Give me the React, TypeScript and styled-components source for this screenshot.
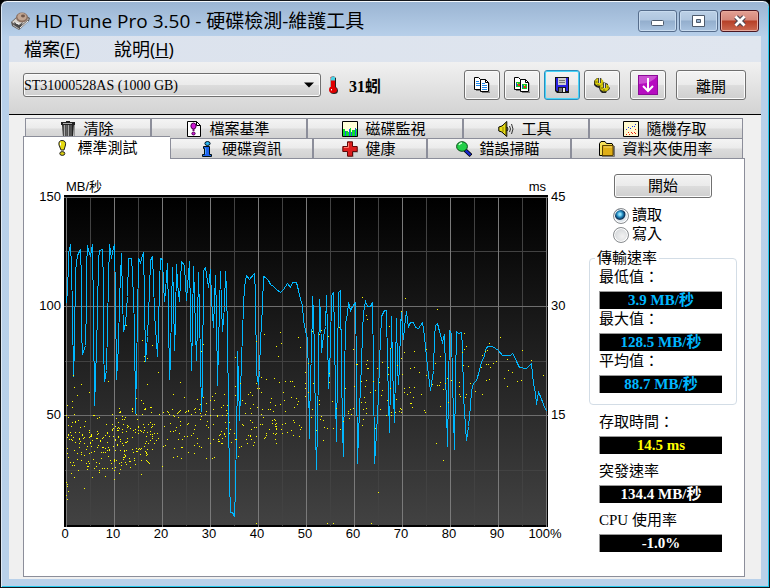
import React, { useState } from "react";
import styled, { createGlobalStyle, css } from "styled-components";

const UI_FONT = `"Liberation Serif", "Noto Sans CJK TC", sans-serif`;
const TITLE_FONT = `"Open Sans", "Noto Sans CJK TC", sans-serif`;
const AXIS_FONT = `"Liberation Sans", "Noto Sans CJK TC", sans-serif`;
const EDGE = "#8c8e9a";

const Global = createGlobalStyle`
  * { box-sizing: border-box; }
  body { margin: 0; background: #000; }
  button, select, input { font: inherit; color: inherit; margin: 0; }
`;

const Window = styled.div`
  min-height: 100vh;
  display: flex;
  flex-direction: column;
  padding: 0 8px 8px;
  border: 1px solid #14161b;
  border-radius: 7px 7px 0 0;
  background: linear-gradient(#9ab4d2 0, #b8d0ea 36px, #b9d1ea 100%);
  box-shadow: inset 0 1px #f4f8fc, inset 1px 0 #dfeaf6, inset -1px -1px #25c9ee;
  font-family: ${UI_FONT};
  font-size: 15px;
  font-weight: 400;
  color: #000;
`;

const TitleBar = styled.header`
  height: 35px;
  padding: 5px 2px 0 2px;
  display: flex;
  align-items: center;
  gap: 4px;
`;

const Title = styled.h1`
  flex: 1;
  margin: 0;
  font-family: ${TITLE_FONT};
  font-size: 19px;
  line-height: 28px;
  font-weight: 400;
  white-space: nowrap;
`;

const Caption = styled.div`
  display: flex;
  gap: 2px;
`;

const CaptionButton = styled.button<{ $close?: boolean }>`
  width: 39px;
  height: 22px;
  padding: 0;
  display: grid;
  place-items: center;
  border: 1px solid ${(p) => (p.$close ? "#4a1621" : "#566d8c")};
  border-radius: 3px;
  box-shadow: inset 0 0 0 1px ${(p) => (p.$close ? "#e8a99c" : "#c8dbef")};
  background: ${(p) =>
    p.$close
      ? "linear-gradient(#e3a094 0, #d5877a 45%, #b63f27 50%, #cc6a52 100%)"
      : "linear-gradient(#bcd0e6 0, #afc6df 45%, #93aecd 50%, #a9c3e0 100%)"};
`;

const MenuBar = styled.nav`
  height: 26px;
  padding: 0 15px;
  display: flex;
  gap: 34px;
  background: linear-gradient(90deg, #dbe2ed, #e0e6ef);
`;

const MenuItem = styled.button`
  padding: 0;
  border: 0;
  background: none;
  font-family: ${TITLE_FONT};
  font-size: 18px;
  line-height: 26px;
  white-space: nowrap;
`;

const Toolbar = styled.div`
  height: 53px;
  padding: 0 15px 6px 14px;
  display: flex;
  align-items: center;
  border-bottom: 1px solid #000;
  background: linear-gradient(#f1f1f1, #d3d3d3);
`;

const raised = css`
  border: 1px solid #707070;
  border-radius: 3px;
  box-shadow: inset 0 0 0 1px #fbfbfb;
  background: linear-gradient(#f3f3f3 0, #ebebeb 48%, #dcdcdc 52%, #cfcfcf 100%);
`;

const DriveBox = styled.label`
  position: relative;
  flex: 0 1 298px;
  height: 24px;
`;

const DriveSelect = styled.select`
  ${raised}
  width: 100%;
  height: 24px;
  padding: 0 20px 0 0;
  appearance: none;
  font-size: 14px;
`;

const DriveArrow = styled.svg`
  position: absolute;
  right: 7px;
  top: 9px;
  pointer-events: none;
`;

const Temperature = styled.output`
  flex: 1;
  margin-left: 7px;
  display: flex;
  align-items: center;
  gap: 11px;
  font-size: 16px;
  font-weight: 700;
  white-space: nowrap;
`;

const Tools = styled.div`
  display: flex;
  gap: 4px;
`;

const ToolButton = styled.button<{ $focus?: boolean; $gap?: boolean; $wide?: boolean }>`
  ${raised}
  width: ${(p) => (p.$wide ? 70 : 36)}px;
  height: 30px;
  padding: 0;
  margin-left: ${(p) => (p.$gap ? 6 : 0)}px;
  display: grid;
  place-items: center;
  ${(p) => p.$focus && "border-color: #2a8dbd; box-shadow: inset 0 0 0 1px #48d4f8;"}
`;

const Body = styled.main`
  flex: 1;
  display: flex;
  flex-direction: column;
  padding: 3px 16px 2px 14px;
  background: #f0f0f0;
`;

const TabRow = styled.div<{ $cols: string; $back?: boolean }>`
  display: grid;
  grid-template-columns: ${(p) => p.$cols};
  height: 20px;
  margin: 0 2px 0 ${(p) => (p.$back ? 2 : 0)}px;
`;

const Tab = styled.button<{ $active?: boolean }>`
  min-width: 0;
  padding: 0 2px 0 0;
  display: flex;
  align-items: center;
  justify-content: center;
  gap: 7px;
  border: 1px solid ${EDGE};
  border-bottom: 0;
  line-height: 18px;
  white-space: nowrap;
  background: linear-gradient(#f4f4f4 0, #ebebeb 48%, #dcdcdc 52%, #d2d2d2 100%);
  ${(p) =>
    p.$active &&
    css`
      position: relative;
      z-index: 1;
      margin: -2px 0 -1px;
      border-right: 0;
      background: #fff;
    `}
`;

const Panel = styled.section`
  flex: 1;
  display: flex;
  padding: 15px 7px 20px 0;
  border: 1px solid ${EDGE};
  background: #fff;
`;

const ChartArea = styled.figure`
  flex: 1;
  min-width: 0;
  margin: 0;
  padding-top: 5px;
  display: grid;
  grid-template-columns: 40px 1fr 41px;
  grid-template-rows: 16px 332px auto;
  align-content: start;
  font-family: ${AXIS_FONT};
  font-size: 13px;
  line-height: 16px;
`;

const Units = styled.div`
  grid-column: 2;
  display: flex;
  justify-content: space-between;
  padding: 0 2px;
`;

const Plot = styled.svg`
  grid-column: 2;
  width: 100%;
  height: 332px;
  display: block;
`;

const Scale = styled.div<{ $right?: boolean }>`
  grid-row: 2;
  grid-column: ${(p) => (p.$right ? 3 : 1)};
  margin-top: -6px;
  padding: 0 3px;
  display: grid;
  grid-auto-rows: 109px;
  text-align: ${(p) => (p.$right ? "left" : "right")};
`;

const Ruler = styled.div`
  grid-column: 1 / -1;
  padding: 0 20px 0 17px;
  display: grid;
  grid-template-columns: repeat(11, 1fr);
  line-height: 14px;
  text-align: center;
`;

const Side = styled.aside`
  flex: 0 0 148px;
  display: flex;
  flex-direction: column;
`;

const StartButton = styled.button`
  ${raised}
  width: 98px;
  height: 24px;
  padding: 0;
  align-self: center;
  line-height: 20px;
`;

const Modes = styled.div`
  margin: 8px 0 5px 24px;
  display: grid;
`;

const ModeLabel = styled.label`
  display: flex;
  align-items: center;
  gap: 3px;
  line-height: 19px;
`;

const Radio = styled.input`
  appearance: none;
  width: 16px;
  height: 16px;
  border: 1px solid #8a8d90;
  border-radius: 50%;
  box-shadow: inset 0 0 0 1px #fff;
  background: radial-gradient(circle at 60% 60%, #f2f2f2, #c9cdd1);
  &:checked {
    background: radial-gradient(circle at 42% 38%, #8fe0fb 0 1px, #1f87bd 3px, #0c2f55 5px, #dfe6ec 6px);
  }
`;

const Group = styled.fieldset`
  min-width: 0;
  height: 156px;
  margin: 0;
  padding: 0 9px;
  border: 1px solid #d3dde6;
  border-radius: 4px;
`;

const Legend = styled.legend`
  margin-left: -4px;
  padding: 0 2px;
  line-height: 18px;
`;

const Readings = styled.div<{ $gap: number; $inset?: boolean }>`
  display: grid;
  gap: ${(p) => p.$gap}px;
  width: ${(p) => (p.$inset ? "123px" : "auto")};
  margin: ${(p) => (p.$inset ? "7px 0 0 10px" : "0")};
`;

const ReadingBox = styled.div`
  width: 123px;
  display: grid;
  gap: 4px;
  line-height: 20px;
  white-space: nowrap;
`;

const Value = styled.output<{ $color: string }>`
  height: 18px;
  border-top: 1px solid #9a9a9a;
  border-left: 1px solid #9a9a9a;
  background: #000;
  color: ${(p) => p.$color};
  font-weight: 700;
  line-height: 17px;
  text-align: center;
`;

const TRACE: number[] = [
  109,370,112,325,114,260,116,220,121,192,124,260,127,400,130,590,133,500,137,270,142,225,151,208,154,300,155,450,158,523,
  165,495,168,370,170,260,172,195,176,210,180,228,187,192,190,400,193,675,197,600,201,400,204,240,208,210,217,208,219,310,
  221,500,224,605,230,570,233,440,236,300,239,192,244,235,248,215,253,193,256,350,260,598,265,500,268,360,271,290,274,220,
  277,350,281,455,286,430,291,350,296,235,305,235,308,280,312,440,316,700,319,560,322,420,325,235,331,248,336,225,340,217,
  343,350,346,545,353,470,357,330,361,240,367,228,370,300,374,400,382,530,385,450,388,310,391,235,397,238,400,310,403,365,
  407,330,412,250,415,400,418,599,421,540,424,380,427,262,430,350,433,510,436,420,439,253,443,310,448,365,454,245,463,255,
  466,310,470,360,473,320,478,245,481,400,484,572,487,430,490,258,493,350,499,540,502,430,506,278,509,400,514,695,517,610,
  520,270,526,262,535,322,541,268,545,360,550,443,556,285,559,400,562,617,566,500,571,275,574,380,577,455,583,380,586,273,
  589,330,593,450,595,700,598,900,601,998,608,998,613,1009,616,925,619,760,621,600,622,515,625,600,628,720,631,640,634,540,
  637,460,640,380,643,320,649,287,658,297,673,280,676,340,679,580,685,612,688,570,692,480,696,380,700,290,706,292,715,302,
  720,313,730,320,740,328,751,337,760,328,773,310,781,322,788,307,800,307,804,330,810,358,817,375,821,420,826,450,831,475,
  834,590,838,776,842,560,844,550,847,348,851,400,854,520,857,750,859,868,862,740,865,560,868,357,871,400,874,518,880,470,
  886,440,890,345,892,450,895,626,898,560,900,510,904,345,910,337,913,450,916,650,919,785,922,560,925,337,931,331,934,560,
  937,745,940,830,943,600,947,430,951,400,955,368,961,390,968,378,976,367,979,560,982,851,985,760,988,700,991,610,994,560,
  998,450,1001,400,1006,363,1012,380,1020,378,1028,367,1030,560,1033,851,1039,760,1045,650,1048,540,1051,480,1054,410,
  1062,391,1069,391,1072,550,1077,757,1080,600,1084,408,1087,560,1093,728,1096,560,1099,415,1102,560,1105,613,1108,560,
  1111,440,1115,395,1118,450,1120,478,1123,440,1129,393,1132,420,1136,438,1140,427,1150,427,1157,442,1165,444,1176,427,
  1180,445,1186,500,1192,560,1198,610,1201,632,1205,610,1210,570,1213,470,1216,435,1222,430,1229,455,1237,487,1243,463,
  1247,570,1252,800,1255,640,1259,450,1264,460,1267,600,1273,808,1276,600,1279,455,1286,460,1294,457,1297,500,1300,650,
  1305,740,1309,782,1314,740,1320,680,1325,630,1331,610,1340,600,1348,570,1354,545,1361,535,1368,503,1376,498,1388,500,
  1405,511,1418,526,1440,526,1447,521,1453,528,1460,545,1468,562,1488,566,1503,549,1507,580,1510,610,1515,640,1519,673,
  1525,636,1532,650,1540,672,1550,693,
];

const UPPER_LEFT = [
  289,436,337,481,343,529,344,544,352,535,367,496,520,493,514,514,616,532,679,484,703,463,739,499,745,529,
];
const LOWER_LEFT = [
  130,46,154,73,133,82,178,97,142,106,127,124,112,136,127,142,133,163,109,166,235,64,385,37,352,73,451,67,430,103,319,115,
  334,121,340,130,343,148,463,112,502,118,520,112,547,109,556,100,583,103,541,121,553,121,268,145,307,145,307,154,412,154,
  418,163,427,148,445,157,448,154,469,154,496,157,493,148,511,133,530,130,550,148,580,136,574,142,616,79,631,70,616,106,
  637,121,646,130,655,103,661,97,667,106,679,70,682,85,688,85,694,97,694,52,709,58,733,55,748,67,670,133,697,148,721,148,
  730,154,700,172,727,181,727,190,739,205,736,223,739,220,709,220,706,232,703,235,718,208,697,193,739,250,667,187,664,208,
  661,229,664,238,673,247,670,256,655,226,649,238,652,250,640,196,628,262,625,289,619,238,613,220,634,259,679,490,598,220,
  583,220,577,235,577,250,568,244,550,238,541,250,553,292,547,295,529,295,109,367,112,373,112,379,109,406,112,418,115,394,
  163,385,133,352,187,352,226,349,253,358,334,343,268,340,397,319,430,292,454,295,442,289,493,280,508,259,514,262,475,277,
];
const UPPER_RIGHT = [
  31,457,19,499,34,490,25,529,85,472,91,502,115,550,127,454,148,463,154,451,175,469,208,442,277,352,289,406,292,418,
  250,508,259,553,292,541,289,553,296,565,337,547,358,439,361,505,355,562,322,565,406,355,394,394,403,517,433,514,433,562,
  394,535,382,556,502,388,469,508,496,550,511,529,583,460,589,499,583,508,577,517,580,556,595,559,637,526,646,514,652,511,
  658,490,691,472,649,553,655,553,661,562,670,550,679,544,712,538,757,511,784,541,
];
const LOWER_RIGHT = [
  13,55,46,64,61,64,67,64,73,80,40,97,4,115,1,127,31,133,43,121,64,112,79,115,85,124,82,133,73,142,0,148,46,154,16,181,
  19,190,37,193,46,190,70,181,73,187,88,196,94,202,91,208,16,199,19,208,19,220,34,208,37,220,52,217,64,211,70,226,88,229,
  16,238,19,250,106,38,106,70,106,85,106,109,115,97,127,148,130,70,124,172,148,121,148,133,154,169,151,178,160,181,163,202,
  172,205,190,205,160,241,139,211,178,40,178,67,187,124,199,145,211,208,220,184,226,85,235,154,241,148,235,160,244,163,
  238,175,253,79,250,145,262,13,274,64,286,79,289,61,292,25,283,112,274,127,286,127,280,148,289,145,289,160,280,178,
  277,196,301,97,316,91,316,205,310,64,328,67,334,106,337,91,331,148,349,166,352,121,355,43,361,85,364,157,364,166,376,157,
  379,118,391,145,388,154,394,148,394,157,397,43,403,85,403,97,412,103,421,97,418,82,421,130,424,130,427,142,430,112,
  433,82,421,25,448,37,454,103,469,46,463,151,466,157,487,73,502,76,508,76,496,10,511,67,511,139,520,88,526,70,532,55,
  535,127,544,61,568,67,568,79,568,103,571,109,580,16,595,19,586,112,589,103,616,94,637,103,649,61,658,58,670,10,679,4,
  715,31,727,37,703,55,712,79,742,64,754,61,784,1,820,46,499,250,520,301,325,397,172,490,190,490,304,490,634,22,601,70,
];

type Pt = [number, number];

const pairs = (list: number[], dx = 0, dy = 0): Pt[] => {
  const out: Pt[] = [];
  for (let i = 0; i < list.length; i += 2) out.push([list[i] + dx, list[i + 1] + dy]);
  return out;
};

/* Dense clusters of short access times, spread by a fixed seed. */
const cluster = (seed: number, count: number, x0: number, x1: number, y0: number, y1: number): Pt[] => {
  let s = seed;
  const next = () => (s = (s * 16807) % 2147483647) / 2147483647;
  return Array.from({ length: count }, () => {
    const t = next();
    return [x0 + t * (x1 - x0), y0 + next() * (y1 - y0) - t * 30] as Pt;
  });
};

/* Samples are stored at three units per pixel of the plot. */
const toPlot = ([x, y]: Pt): Pt => [Math.floor(x / 3) - 34, Math.floor(y / 3) - 15];

const LINE = pairs(TRACE).map(toPlot).map(([x, y]) => `${x},${y}`).join(" ");
const DOTS = [
  ...pairs(UPPER_LEFT),
  ...pairs(LOWER_LEFT, 0, 540),
  ...pairs(UPPER_RIGHT, 720),
  ...pairs(LOWER_RIGHT, 720, 540),
  ...cluster(71, 190, 112, 375, 760, 890),
  ...cluster(523, 70, 112, 375, 710, 790),
  ...cluster(977, 75, 380, 600, 700, 820),
  ...cluster(4242, 22, 600, 740, 670, 790),
]
  .map(toPlot)
  .map(([x, y]) => `M${x} ${y}h1v1h-1z`)
  .join("");

const STEPS = Array.from({ length: 21 }, (_, i) => i);
const ROWS = [2, 56, 111, 166, 220, 275];

function BenchmarkPlot() {
  return (
    <Plot viewBox="0 0 484 332" preserveAspectRatio="none" shapeRendering="crispEdges" role="img" aria-label="MB/秒">
      <defs>
        <linearGradient id="plotFill" x1="0" y1="0" x2="0" y2="1">
          <stop offset="0" stopColor="#000" />
          <stop offset="1" stopColor="#424242" />
        </linearGradient>
      </defs>
      <rect width="484" height="332" fill="#000" />
      <rect x="2" y="3" width="481" height="327" fill="url(#plotFill)" />
      {ROWS.map((y, i) => (i % 2 ? <rect key={y} x="1" y={y} width="482" height="1" fill="#424242" /> : null))}
      {STEPS.map((i) => (i % 2 ? <rect key={i} x={2 + i * 24} y="3" width="1" height="328" fill="#424242" /> : null))}
      {ROWS.map((y, i) => (i % 2 ? null : <rect key={y} x="0" y={y} width="484" height="1" fill="#6e6e6e" />))}
      {STEPS.map((i) => (i % 2 ? null : <rect key={i} x={2 + i * 24} y="3" width="1" height="329" fill="#7a7a7a" />))}
      <polyline points={LINE} transform="translate(.5 .5)" fill="none" stroke="#00b7ff" strokeWidth="1" />
      <path d={DOTS} fill="#ff0" />
    </Plot>
  );
}

const Icon = ({ children, size = 16 }: { children: React.ReactNode; size?: number }) => (
  <svg width={size} height={size} viewBox="0 0 16 16" aria-hidden="true">
    {children}
  </svg>
);

const AppIcon = () => (
  <svg width="20" height="20" viewBox="0 0 20 20" aria-hidden="true">
    <path d="M0 11 10 2l9 5-1 3-10 9-7-4z" fill="#5f5a58" />
    <path d="M1 11 10 3l8 5-10 8z" fill="#d9d4ce" />
    <ellipse cx="11" cy="6.500" rx="6" ry="5" fill="#8a6f60" />
    <ellipse cx="11" cy="5.800" rx="4.600" ry="3.700" fill="#c2a692" />
    <ellipse cx="12" cy="5" rx="2" ry="1.400" fill="#70574a" />
    <path d="M3 11l5 3 4-3-3 6-5-2z" fill="#4c4a4a" />
    <path d="M5 12l3 1M9 17l8-7" stroke="#f7f7f7" />
    <path d="M2 14l6 4" stroke="#b6b6b6" />
  </svg>
);

const Thermometer = () => (
  <svg width="10" height="18" viewBox="0 0 10 18" aria-hidden="true">
    <path d="M3 2q2-3 5 0v9q2 1 2 3.500a4 3.500 0 0 1-8 0q0-2.500 1-3.500z" fill="#222" />
    <path d="M2 2q2-3 5-1v10q2 1 2 3a4 3 0 0 1-8 0q0-2 1-3V2z" fill="#e00000" />
    <path d="M3 1.500q1-2 4-.5v3.500H3z" fill="#49d3e6" />
    <path d="M2.500 2v9" stroke="#a9a9a9" />
    <path d="M3.500 13v1.500" stroke="#fff" />
  </svg>
);

const Pages = ({ picture }: { picture?: boolean }) => (
  <Icon>
    <path d="M2 13.500h5M8 15.500h8V6" stroke="#777" fill="none" />
    <path d="M.5.5h4l2 2v10h-6z" fill="#fff" stroke="#000" />
    <path d="M6.500 2.500h5l3 3v9h-8z" fill="#fff" stroke="#000" />
    <path d="M11.500 2.500v3h3" fill="none" stroke="#000" />
    {picture ? (
      <>
        <path d="M2 5h4v5H2zM8 7h5v5H8z" fill="#15c42b" />
        <path d="M2 6h1v3H2zM8 8h1v3H8z" fill="#1458d8" />
        <path d="M4 7h2v2H4zM10 9h2v2h-2z" fill="#f02a10" />
        <path d="M3 6h1v1H3zM10 8h1v1h-1z" fill="#ffee20" />
      </>
    ) : (
      <path d="M2 4.500h3M2 6.500h4M2 8.500h4M8 6.500h3M8 8.500h5M8 10.500h5M8 12.500h5" stroke="#1c86e8" />
    )}
  </Icon>
);

const Floppy = () => (
  <Icon>
    <path d="M1 0h14v16H3l-2-2z" fill="#111" />
    <path d="M2 1h12v13H3l-1-1z" fill="#2a22e0" />
    <path d="M4 1h8v7H4z" fill="#cfcfcf" />
    <path d="M5 3.500h6M5 5.500h6" stroke="#777" />
    <path d="M4 10h8v5H4z" fill="#1a1a1a" />
    <path d="M9 11h2v4H9z" fill="#eee" />
    <path d="M5 11h3v4H5z" fill="#777" />
  </Icon>
);

const Gears = () => (
  <Icon>
    <path d="M0 4l2-2 1-1h4l1 2 1 2 3 1 2 1v2l2 2-1 2-2 1-1 2h-4l-2-2-1-3-3-1-2-2z" fill="#222" />
    <ellipse cx="5" cy="5" rx="4" ry="3.600" fill="#dccf10" strokeDasharray="2 1" stroke="#c4b800" />
    <ellipse cx="10.500" cy="10.500" rx="4.200" ry="3.600" fill="#dccf10" strokeDasharray="2 1" stroke="#c4b800" />
    <path d="M1.500 5h2M3 8h2M7 11h2M9 13h2M13 10h1" stroke="#6b6200" />
    <path d="M5.500 1v5M10.500 6v5" stroke="#444" strokeWidth="3" />
    <path d="M5.500 1v5M10.500 6v5" stroke="#ddd" />
  </Icon>
);

const DownArrow = () => (
  <svg width="20" height="20" viewBox="0 0 20 20" aria-hidden="true">
    <rect x="0.500" y="0.500" width="19" height="19" fill="#b60cc0" stroke="#8a0b96" />
    <path d="M1 9V1h18q-4 7-18 8z" fill="#cb50d3" />
    <path d="M10 3v12M5 11l5 5 5-5" stroke="#fff" strokeWidth="2" fill="none" />
  </svg>
);

const Trash = () => (
  <Icon>
    <path d="M4 15.500h10.500V4" stroke="#999" fill="none" />
    <path d="M2 3h12l-1 13H3z" fill="#222" />
    <path d="M4.500 4v11M8.500 4v11" stroke="#aaa" strokeWidth="1.600" />
    <path d="M6.500 4v11M11 4v11" stroke="#666" strokeWidth="1.400" />
    <path d="M1 1h14v3H1z" fill="#222" />
    <path d="M6 1h4" stroke="#222" strokeWidth="2" />
    <path d="M3 2.500h9" stroke="#aaa" />
  </Icon>
);

const FileMark = () => (
  <Icon>
    <path d="M1.500.5h9l4 4v11h-13z" fill="#fff" stroke="#000" />
    <path d="M10.500.5v4h4" fill="none" stroke="#000" />
    <ellipse cx="7.500" cy="5" rx="2.600" ry="3" fill="#d018d8" stroke="#4a004e" />
    <path d="M6.500 8h2v2h-2z" fill="#6a0870" />
    <ellipse cx="7.500" cy="12.500" rx="1.600" ry="1.500" fill="#d018d8" stroke="#4a004e" />
  </Icon>
);

const Monitor = () => (
  <Icon>
    <path d="M.5.5h15v15H.5z" fill="#ffffd8" stroke="#000" />
    <path d="M1 8h2v7H1zM4 10h2v5H4zM6 11h1v4H6zM8 7h1v8H8zM10 9h3v6h-3zM14 8h1v7h-1z" fill="#0be02b" />
    <path d="M3 10h1v5H3zM7 8h1v7H7zM9 11h1v4H9zM13 7h1v8h-1z" fill="#2458e8" />
  </Icon>
);

const Speaker = () => (
  <Icon>
    <path d="M.8 6v4l3 1 5 4.500V.5L4 5z" fill="#e8dc18" stroke="#000" />
    <path d="M5 6v5M7.500 2v12" stroke="#8f8500" />
    <path d="M9 6q2 2 0 4" fill="#fff" stroke="#000" />
    <path d="M11.500 5q2 3 0 6M13.500 3q3 5 0 10" stroke="#333" fill="none" />
  </Icon>
);

const Scatter = () => (
  <Icon>
    <path d="M.5.5h15v15H.5z" fill="#fff9cf" stroke="#000" />
    <path d="M3 8h1v1H3zM5 6h1v1H5zM7 7h1v1H7zM9 5h1v1H9zM11 5h1v1h-1zM12 3h1v1h-1z" fill="#1b35e8" />
    <path d="M3 13h1v1H3zM5 11h1v1H5zM6 13h1v1H6zM8 11h1v1H8zM9 12h1v1H9zM11 11h1v1h-1zM12 8h1v1h-1zM12 12h1v1h-1z" fill="#ee2410" />
  </Icon>
);

const Exclaim = () => (
  <Icon>
    <path d="M8 .5c3 0 4 2 3.500 4.500L10 10H7L5 5C4.500 2 5.500.5 8 .5z" fill="#e6da10" stroke="#222" />
    <path d="M6.500 2.500v3" stroke="#fff" />
    <ellipse cx="8.300" cy="13.500" rx="2.500" ry="1.900" fill="#d9cd10" stroke="#222" />
  </Icon>
);

const Info = () => (
  <Icon>
    <ellipse cx="8.500" cy="2.500" rx="2.600" ry="2" fill="#2bb8f0" stroke="#012" />
    <path d="M4.500 5.500h6v8h2v2h-9v-2h2v-6h-1z" fill="#1d62f0" stroke="#011" />
    <path d="M6.500 7v6" stroke="#4fa4ff" />
  </Icon>
);

const Health = () => (
  <Icon>
    <path d="M6 16h5v-5h5V6" stroke="#888" fill="none" />
    <path d="M5.500.8h5v4.700h4.700v5h-4.700v4.700h-5v-4.700H.8v-5h4.700z" fill="#dc1d1d" stroke="#5e0808" />
    <path d="M6.500 2v4.500H2" stroke="#ff7d70" fill="none" />
  </Icon>
);

const Magnifier = () => (
  <Icon>
    <path d="M9 9l6 5.500" stroke="#000" strokeWidth="4" />
    <path d="M9.500 9.500l5 4.600" stroke="#1526c8" strokeWidth="2.400" />
    <ellipse cx="6" cy="5.500" rx="5.400" ry="4.800" fill="#22cf48" stroke="#084a16" />
    <path d="M3 4q1-2 3-2" stroke="#c9ffd2" fill="none" strokeWidth="1.400" />
  </Icon>
);

const Folder = () => (
  <Icon>
    <path d="M3 15.500h12.500V5" stroke="#777" fill="none" />
    <path d="M.5 14.500V2.500l1.500-2h4l1.500 2H13l1 2v10z" fill="#f5e05a" stroke="#000" />
    <path d="M3.500 4.500h10.500v10H3.500z" fill="#dfae16" stroke="#5c4300" />
    <path d="M5 6h8" stroke="#f5d566" />
  </Icon>
);

const BACK_TABS: [string, React.FC][] = [
  ["清除", Trash],
  ["檔案基準", FileMark],
  ["磁碟監視", Monitor],
  ["工具", Speaker],
  ["隨機存取", Scatter],
];
const FRONT_TABS: [string, React.FC][] = [
  ["標準測試", Exclaim],
  ["硬碟資訊", Info],
  ["健康", Health],
  ["錯誤掃瞄", Magnifier],
  ["資料夾使用率", Folder],
];

function Reading({ id, label, value, color }: { id: string; label: string; value: string; color: string }) {
  return (
    <ReadingBox>
      <label htmlFor={id}>{label}</label>
      <Value id={id} $color={color}>
        {value}
      </Value>
    </ReadingBox>
  );
}

export default function App() {
  const [mode, setMode] = useState("read");
  return (
    <>
      <Global />
      <Window>
        <TitleBar>
          <AppIcon />
          <Title>HD Tune Pro 3.50 - 硬碟檢測-維護工具</Title>
          <Caption>
            <CaptionButton aria-label="最小化">
              <svg width="15" height="12" viewBox="0 0 15 12">
                <rect x="1.500" y="5.500" width="12" height="5" rx="1" fill="#fff" stroke="#4d5a6c" />
              </svg>
            </CaptionButton>
            <CaptionButton aria-label="最大化">
              <svg width="13" height="12" viewBox="0 0 13 12">
                <path d="M.5.5h12v11H.5zM4.500 4.500v3h4v-3z" fill="#fff" stroke="#4d5a6c" fillRule="evenodd" />
              </svg>
            </CaptionButton>
            <CaptionButton $close aria-label="關閉">
              <svg width="14" height="12" viewBox="0 0 14 12">
                <path d="M3 2l8 8M11 2l-8 8" stroke="#4b4450" strokeWidth="5" />
                <path d="M2.500 1.500l9 9M11.500 1.500l-9 9" stroke="#fff" strokeWidth="2.800" />
              </svg>
            </CaptionButton>
          </Caption>
        </TitleBar>
        <MenuBar>
          <MenuItem>
            檔案(<u>F</u>)
          </MenuItem>
          <MenuItem>
            說明(<u>H</u>)
          </MenuItem>
        </MenuBar>
        <Toolbar>
          <DriveBox>
            <DriveSelect aria-label="硬碟">
              <option>ST31000528AS (1000 GB)</option>
            </DriveSelect>
            <DriveArrow width="10" height="6" viewBox="0 0 10 6">
              <path d="M0 .5h10L5 5.500z" />
            </DriveArrow>
          </DriveBox>
          <Temperature>
            <Thermometer />
            31蚓
          </Temperature>
          <Tools>
            <ToolButton aria-label="複製文字">
              <Pages />
            </ToolButton>
            <ToolButton aria-label="複製圖片">
              <Pages picture />
            </ToolButton>
            <ToolButton $focus aria-label="儲存">
              <Floppy />
            </ToolButton>
            <ToolButton aria-label="選項">
              <Gears />
            </ToolButton>
            <ToolButton $gap aria-label="下移">
              <DownArrow />
            </ToolButton>
            <ToolButton $gap $wide>
              離開
            </ToolButton>
          </Tools>
        </Toolbar>
        <Body>
          <TabRow role="tablist" $back $cols="126fr 156fr 156fr 126fr 154fr">
            {BACK_TABS.map(([name, Glyph]) => (
              <Tab key={name} role="tab" aria-selected={false}>
                <Glyph />
                {name}
              </Tab>
            ))}
          </TabRow>
          <TabRow role="tablist" $cols="147fr 143fr 114fr 144fr 172fr">
            {FRONT_TABS.map(([name, Glyph], i) => (
              <Tab key={name} role="tab" aria-selected={i === 0} $active={i === 0}>
                <Glyph />
                {name}
              </Tab>
            ))}
          </TabRow>
          <Panel role="tabpanel">
            <ChartArea>
              <Units>
                <span>MB/秒</span>
                <span>ms</span>
              </Units>
              <Scale>
                <span>150</span>
                <span>100</span>
                <span>50</span>
              </Scale>
              <BenchmarkPlot />
              <Scale $right>
                <span>45</span>
                <span>30</span>
                <span>15</span>
              </Scale>
              <Ruler>
                {["0", "10", "20", "30", "40", "50", "60", "70", "80", "90", "100%"].map((t) => (
                  <span key={t}>{t}</span>
                ))}
              </Ruler>
            </ChartArea>
            <Side>
              <StartButton>開始</StartButton>
              <Modes role="radiogroup">
                <ModeLabel>
                  <Radio type="radio" name="mode" checked={mode === "read"} onChange={() => setMode("read")} />
                  讀取
                </ModeLabel>
                <ModeLabel>
                  <Radio type="radio" name="mode" checked={mode === "write"} onChange={() => setMode("write")} />
                  寫入
                </ModeLabel>
              </Modes>
              <Group>
                <Legend>傳輸速率</Legend>
                <Readings $gap={0}>
                  <Reading id="min" label="最低值：" value="3.9 MB/秒" color="#00b7ff" />
                  <Reading id="max" label="最大值：" value="128.5 MB/秒" color="#00b7ff" />
                  <Reading id="avg" label="平均值：" value="88.7 MB/秒" color="#00b7ff" />
                </Readings>
              </Group>
              <Readings $gap={7} $inset>
                <Reading id="access" label="存取時間：" value="14.5 ms" color="#ffff00" />
                <Reading id="burst" label="突發速率" value="134.4 MB/秒" color="#ffffff" />
                <Reading id="cpu" label="CPU 使用率" value="-1.0%" color="#ffffff" />
              </Readings>
            </Side>
          </Panel>
        </Body>
      </Window>
    </>
  );
}
